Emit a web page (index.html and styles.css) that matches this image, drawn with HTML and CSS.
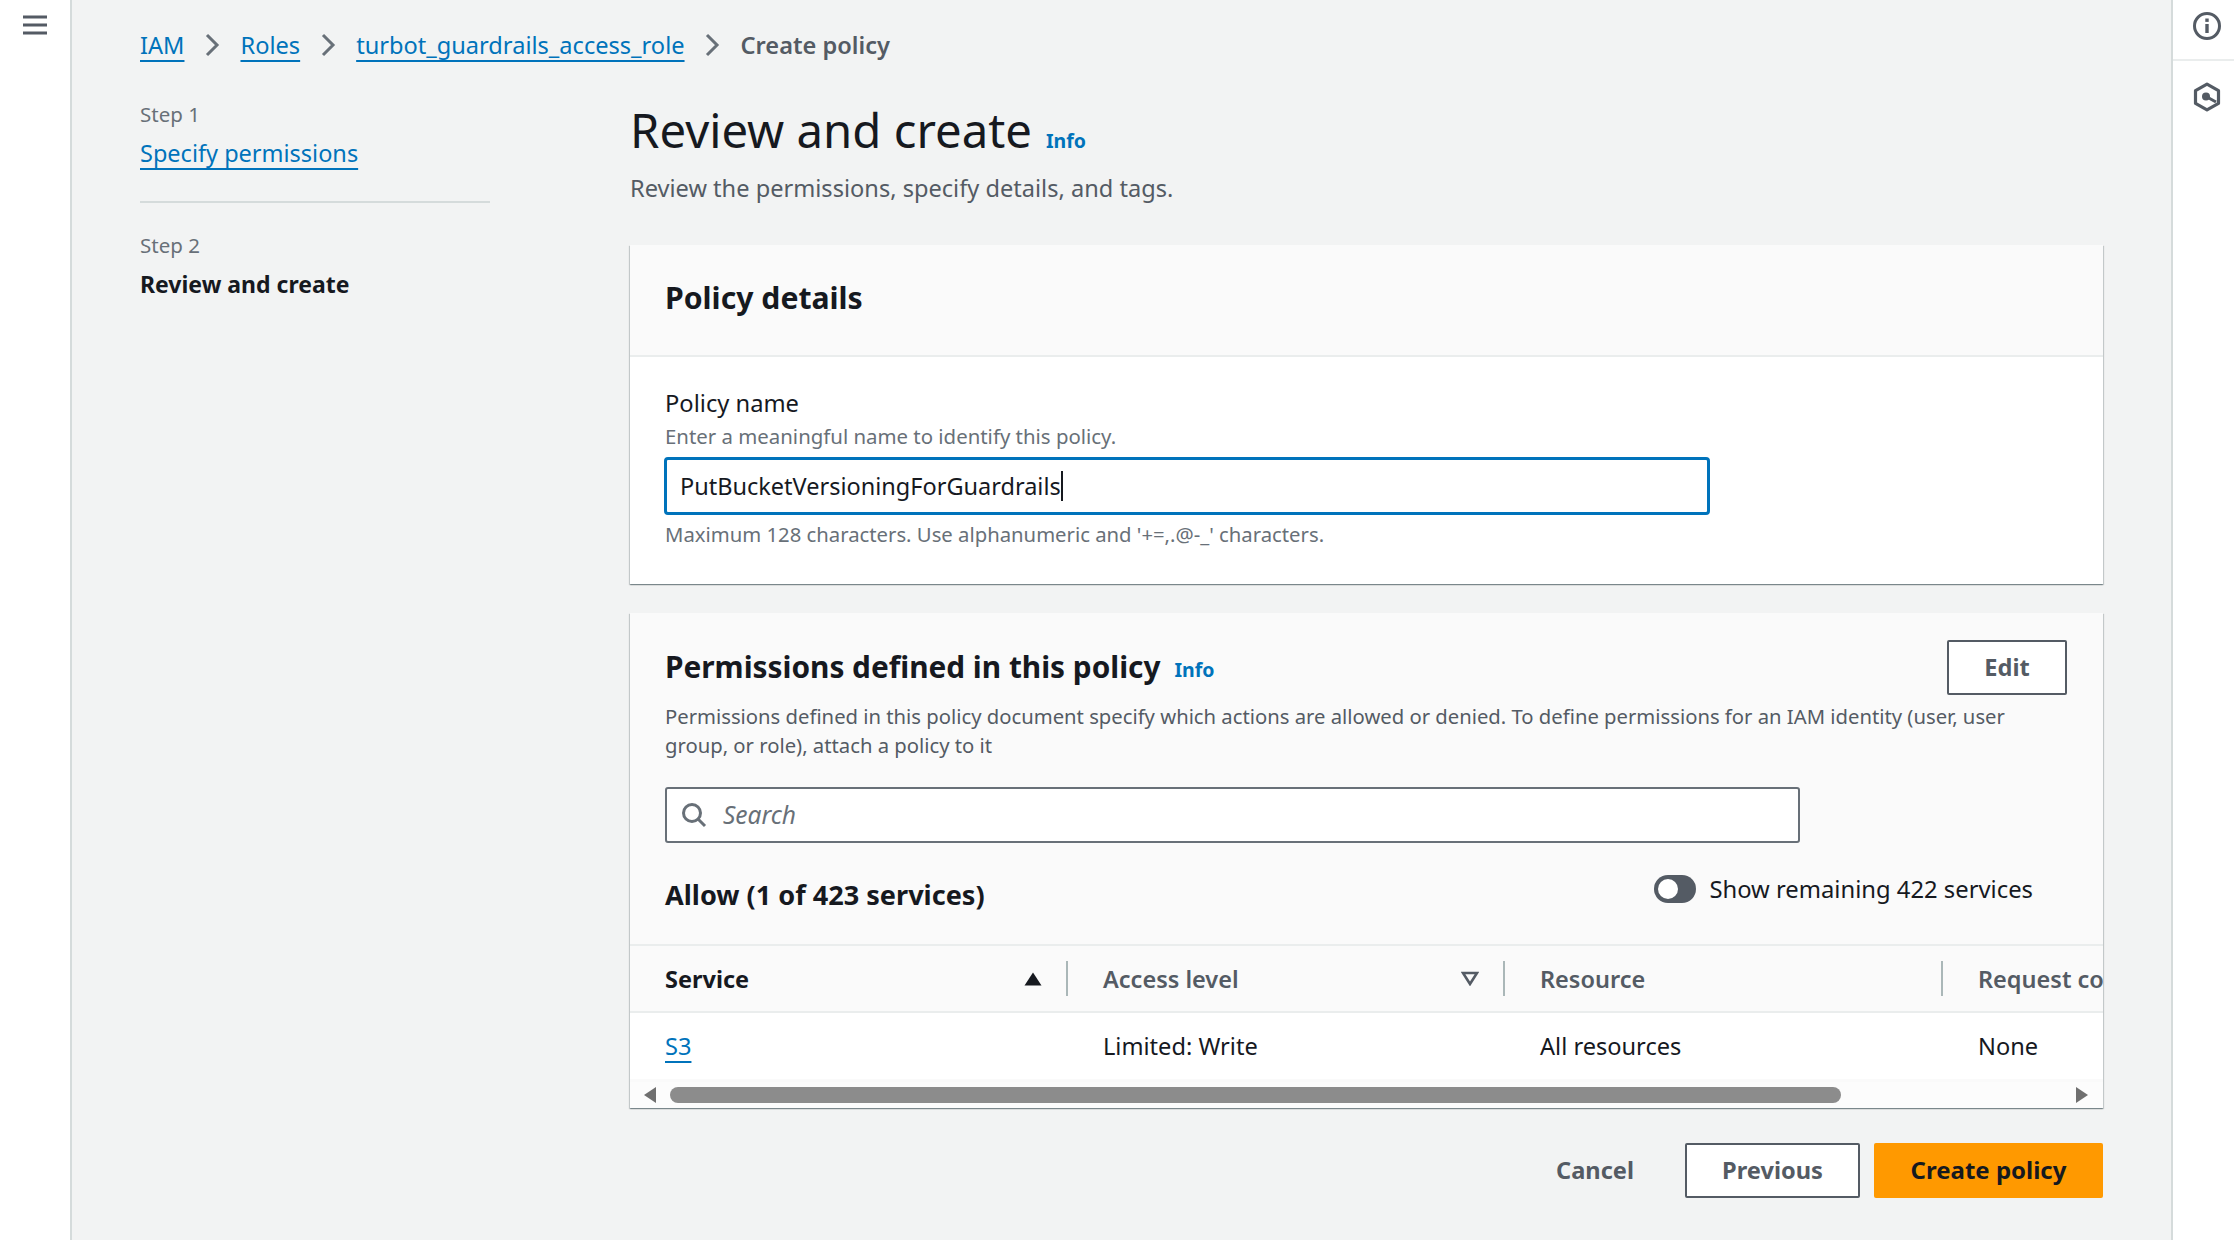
FILE: index.html
```html
<!DOCTYPE html>
<html lang="en">
<head>
<meta charset="utf-8">
<title>Create policy</title>
<link rel="stylesheet" href="styles.css">
</head>
<body>
<div class="shell">
  <aside class="leftrail">
    <svg class="burger" width="26" height="22" viewBox="0 0 26 22"><path d="M1 3h24M1 11h24M1 19h24" stroke="#545b64" stroke-width="3" fill="none"/></svg>
  </aside>
  <main class="content">
    <nav class="crumbs">
      <a href="#">IAM</a>
      <svg class="chev" width="15" height="24" viewBox="0 0 15 24"><path d="M2 2l10 10-10 10" stroke="#687078" stroke-width="3" fill="none"/></svg>
      <a href="#">Roles</a>
      <svg class="chev" width="15" height="24" viewBox="0 0 15 24"><path d="M2 2l10 10-10 10" stroke="#687078" stroke-width="3" fill="none"/></svg>
      <a href="#">turbot_guardrails_access_role</a>
      <svg class="chev" width="15" height="24" viewBox="0 0 15 24"><path d="M2 2l10 10-10 10" stroke="#687078" stroke-width="3" fill="none"/></svg>
      <span class="crumb-current">Create policy</span>
    </nav>
    <div class="wizard">
      <div class="steps">
        <div class="step-label">Step 1</div>
        <a class="step-link" href="#">Specify permissions</a>
        <hr class="step-rule">
        <div class="step-label">Step 2</div>
        <div class="step-active">Review and create</div>
      </div>
      <div class="main">
        <div class="title-row"><h1>Review and create</h1><a class="info info-h1" href="#">Info</a></div>
        <p class="subtitle">Review the permissions, specify details, and tags.</p>

        <section class="card card-details">
          <header class="details-head"><h2>Policy details</h2></header>
          <div class="details-body">
            <div class="field-label">Policy name</div>
            <div class="field-desc">Enter a meaningful name to identify this policy.</div>
            <div class="name-input"><span>PutBucketVersioningForGuardrails</span><i class="caret"></i></div>
            <div class="field-hint">Maximum 128 characters. Use alphanumeric and '+=,.@-_' characters.</div>
          </div>
        </section>

        <section class="card card-perms">
          <div class="perms-top">
            <div class="perms-title-row">
              <h2>Permissions defined in this policy</h2><a class="info info-h2" href="#">Info</a>
              <button class="btn btn-edit">Edit</button>
            </div>
            <p class="perms-desc">Permissions defined in this policy document specify which actions are allowed or denied. To define permissions for an IAM identity (user, user group, or role), attach a policy to it</p>
            <div class="search">
              <svg width="26" height="26" viewBox="0 0 26 26"><circle cx="11" cy="11" r="8.5" stroke="#687078" stroke-width="3" fill="none"/><path d="M17 17l7 7" stroke="#687078" stroke-width="3" fill="none"/></svg>
              <span>Search</span>
            </div>
            <div class="allow-row">
              <div class="allow">Allow (1 of 423 services)</div>
              <div class="toggle-wrap"><span class="toggle"><i></i></span><span>Show remaining 422 services</span></div>
            </div>
          </div>
          <div class="table">
            <div class="thead">
              <div class="th th-sorted"><span>Service</span>
                <svg width="18" height="14" viewBox="0 0 18 14"><path d="M9 0.5L17.5 13.5H0.5z" fill="#16191f"/></svg></div>
              <div class="th"><span>Access level</span>
                <svg width="18" height="15" viewBox="0 0 18 15"><path d="M2 2h14l-7 11z" fill="none" stroke="#545b64" stroke-width="2.6"/></svg></div>
              <div class="th th-res"><span>Resource</span></div>
              <div class="th th-last"><span>Request condition</span></div>
            </div>
            <div class="trow">
              <div class="td"><a href="#">S3</a></div>
              <div class="td">Limited: Write</div>
              <div class="td">All resources</div>
              <div class="td">None</div>
            </div>
          </div>
          <div class="hscroll">
            <svg width="12" height="16" viewBox="0 0 12 16"><path d="M12 0v16L0 8z" fill="#6f6f6f"/></svg>
            <div class="track"><div class="thumb"></div></div>
            <svg width="12" height="16" viewBox="0 0 12 16"><path d="M0 0v16l12-8z" fill="#6f6f6f"/></svg>
          </div>
        </section>

        <div class="actions">
          <button class="btn btn-link">Cancel</button>
          <button class="btn btn-prev">Previous</button>
          <button class="btn btn-primary">Create policy</button>
        </div>
      </div>
    </div>
  </main>
  <aside class="rightrail">
    <div class="rail-cell rail-info">
      <svg width="30" height="30" viewBox="0 0 30 30"><circle cx="15" cy="15" r="12.5" stroke="#545b64" stroke-width="3" fill="none"/><path d="M15 13v9" stroke="#545b64" stroke-width="3.4"/><path d="M15 7.5v3.4" stroke="#545b64" stroke-width="3.4"/></svg>
    </div>
    <div class="rail-cell rail-hex">
      <svg width="28" height="30" viewBox="0 0 28 30"><path d="M14 2.2L25.5 8.6v12.8L14 27.8 2.500 21.400V8.600z" stroke="#545b64" stroke-width="3.200" fill="none" stroke-linejoin="round"/><circle cx="13" cy="14.500" r="4" fill="#545b64"/><path d="M14 15l9 5" stroke="#545b64" stroke-width="3"/></svg>
    </div>
  </aside>
</div>
</body>
</html>
```
FILE: styles.css
```css
* { box-sizing: border-box; }
html, body { margin: 0; height: 100%; overflow: hidden; }
body { font-family: "Noto Sans", "Open Sans", sans-serif; font-size: 20px; color: #16191f; background: #f2f3f3; }
a { color: #0073bb; text-decoration-thickness: 2px; text-decoration-skip-ink: none; text-underline-offset: 6px; }
h1, h2, p { margin: 0; }
.shell { display: flex; height: 1240px; }
.leftrail { width: 72px; flex: none; background: #fff; border-right: 2px solid #d5dbdb; padding: 14px 0 0 22px; }
.burger { display: block; }
.content { flex: 1; min-width: 0; padding: 0 68px 0 68px; }
.crumbs { height: 90px; display: flex; align-items: center; gap: 20.500px; font-size: 23.6px; }
.crumb-current { color: #545b64; font-weight: 600; }
.chev { flex: none; }
.wizard { display: flex; }
.steps { width: 350px; flex: none; margin-right: 140px; padding-top: 10px; }
.step-label { color: #687078; font-size: 20.500px; line-height: 28px; }
.step-link { display: inline-block; font-size: 23.500px; line-height: 32px; margin-top: 9px; }
.step-rule { border: 0; border-top: 2px solid #d5dbdb; margin: 32px 0 28px; }
.step-active { font-size: 23px; font-weight: 700; line-height: 32px; margin-top: 9px; }
.main { flex: 1; min-width: 0; }
.title-row { display: flex; align-items: baseline; gap: 14px; height: 60px; margin-top: 12px; }
h1 { font-size: 47.300px; font-weight: 400; line-height: 56px; }
.info { font-size: 19.500px; font-weight: 700; text-decoration: none; }
.subtitle { color: #545b64; font-size: 23.600px; line-height: 32px; margin-top: 10px; }
.card { background: #fff; box-shadow: 0 1px 1px 0 rgba(0,28,36,.3), 1px 1px 1px 0 rgba(0,28,36,.15), -1px 1px 1px 0 rgba(0,28,36,.15); }
.card-details { margin-top: 41px; height: 339px; }
.details-head { height: 112px; background: #fafafa; border-bottom: 2px solid #eaeded; padding: 33px 35px 0; }
h2 { font-size: 30.200px; font-weight: 700; line-height: 40px; }
.details-body { padding: 31px 35px 0; }
.field-label { font-size: 23.700px; line-height: 30px; }
.field-desc { color: #687078; font-size: 20.400px; line-height: 28px; margin-top: 4px; margin-bottom: 7px; }
.name-input { width: 1046px; height: 58px; margin-left: -1px; border: 3px solid #0073bb; border-radius: 4px; background: #fff; display: flex; align-items: center; padding-left: 13px; font-size: 23.500px; }
.caret { display: inline-block; width: 2px; height: 30px; background: #16191f; }
.field-hint { color: #687078; font-size: 20.300px; line-height: 28px; margin-top: 5px; }
.card-perms { margin-top: 29px; height: 495px; background: #fafafa; display: flex; flex-direction: column; overflow: hidden; }
.perms-top { padding: 27px 35px 0; height: 331px; }
.perms-title-row { display: flex; align-items: center; }
.perms-title-row h2 { margin-top: -2px; font-size: 29.800px; }
.info-h2 { margin-left: 14px; margin-top: 4px; }
.btn { font-family: inherit; font-size: 23.600px; font-weight: 700; border-radius: 2px; height: 55px; padding: 0 0 2px; cursor: pointer; }
.btn-edit { margin-left: auto; margin-right: 1px; width: 120px; background: #fff; border: 2px solid #545b64; color: #545b64; }
.perms-desc { color: #545b64; font-size: 20.250px; line-height: 28.500px; margin-top: 7px; }
.search { width: 1135px; height: 56px; margin-top: 27.500px; border: 2px solid #687078; border-radius: 3px; background: #fff; display: flex; align-items: center; gap: 16px; padding-left: 14px; color: #687078; font-size: 24.500px; font-style: italic; }
.allow-row { display: flex; justify-content: space-between; align-items: center; height: 40px; margin-top: 32px; padding-right: 35px; }
.allow { font-size: 27.100px; font-weight: 700; }
.toggle-wrap { display: flex; align-items: center; gap: 13px; font-size: 23.800px; margin-top: -11px; }
.toggle { width: 42px; height: 28px; border-radius: 14px; background: #545b64; display: block; padding: 4px; }
.toggle i { display: block; width: 20px; height: 20px; border-radius: 50%; background: #fff; }
.table { flex: 1; display: flex; flex-direction: column; min-height: 0; }
.thead, .trow { display: grid; grid-template-columns: 438px 437px 438px 160px; width: 1473px; overflow: hidden; }
.thead { height: 69px; border-top: 2px solid #eaeded; border-bottom: 2px solid #eaeded; }
.th { display: flex; align-items: center; justify-content: space-between; padding: 0 26px 0 35px; font-size: 23.500px; font-weight: 600; color: #545b64; position: relative; }
.th + .th { padding-left: 35px; }
.th-sorted { color: #16191f; font-weight: 700; }
.th::after { content: ""; position: absolute; right: 0; top: 15px; height: 35px; width: 2px; background: #aab7b8; }
.th-last::after { display: none; }
.th-last { white-space: nowrap; }
.trow { background: #fff; height: 66px; align-items: center; }
.td { padding-left: 35px; font-size: 23.600px; }
.hscroll { height: 26px; background: #fcfcfc; display: flex; align-items: center; gap: 14px; padding: 0 15px 0 14px; }
.track { flex: 1; height: 16px; }
.thumb { width: 1171px; height: 16px; border-radius: 8px; background: #8c8c8c; }
.actions { display: flex; justify-content: flex-end; align-items: center; gap: 14px; margin-top: 35px; }
.btn-link { background: none; border: 0; color: #545b64; width: 152px; }
.btn-prev { background: #fff; border: 2px solid #545b64; color: #545b64; width: 175px; }
.btn-primary { background: #f90; border: 0; color: #16191f; width: 229px; font-size: 24px; }
.rightrail { width: 63px; flex: none; background: #fff; border-left: 2px solid #d5dbdb; }
.rail-cell { display: flex; justify-content: center; padding-left: 6px; }
.rail-info { height: 61px; border-bottom: 2px solid #eaeded; padding-top: 11px; }
.rail-hex { padding-top: 21px; }
```
